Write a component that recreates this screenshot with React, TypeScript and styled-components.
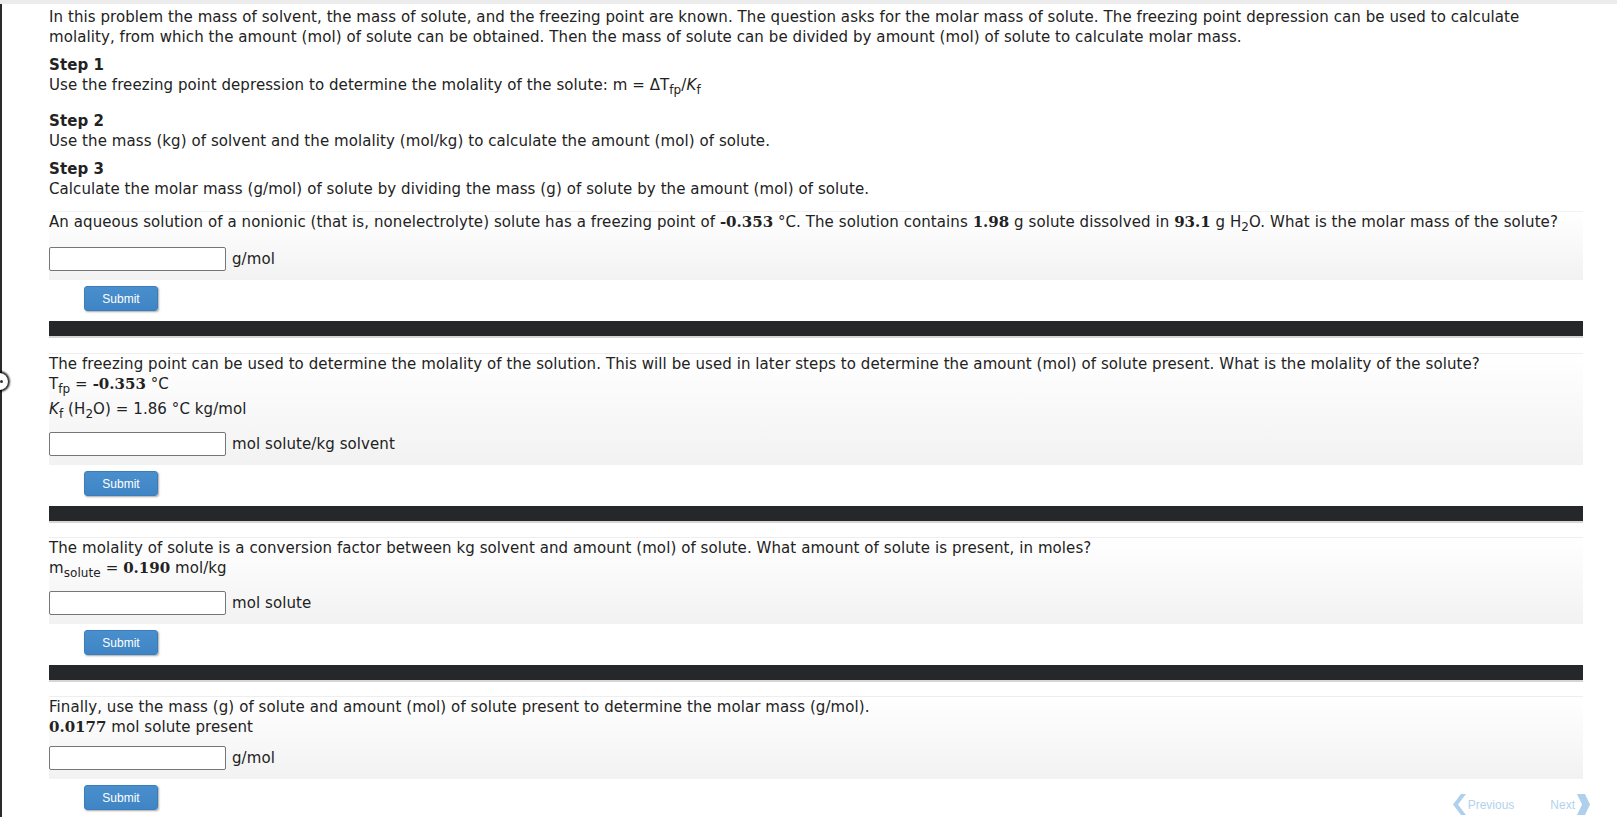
import React from 'react';
import styled, { createGlobalStyle } from 'styled-components';

const GlobalStyle = createGlobalStyle`
  html, body {
    margin: 0;
    padding: 0;
    background: #ffffff;
    overflow: hidden;
  }
  body {
    font-family: "DejaVu Sans", Verdana, sans-serif;
    font-size: 15px;
    line-height: 20px;
    letter-spacing: 0.08px;
    color: #222222;
  }
`;

const Frame = styled.div`
  position: relative;
  min-height: 100vh;
  box-sizing: border-box;
  border-top: 4px solid #ececec;
`;

const Sheet = styled.div`
  min-height: calc(100vh - 4px);
  box-sizing: border-box;
  border-left: 2px solid #2a2a2a;
  padding: 3px 34px 0 47px;
`;

const Handle = styled.div`
  position: absolute;
  left: -9px;
  top: 369px;
  width: 17px;
  height: 17px;
  border-radius: 50%;
  background: #ffffff;
  box-shadow: 0 0 2px 2px rgba(0, 0, 0, 0.85);
  &::after {
    content: '';
    position: absolute;
    left: 9px;
    top: 7px;
    width: 3px;
    height: 3px;
    border-radius: 50%;
    background: #333;
  }
`;

const Para = styled.p<{ gap?: number }>`
  margin: ${p => p.gap ?? 0}px 0 0;
`;

const StepTitle = styled.div<{ gap?: number }>`
  font-weight: bold;
  margin-top: ${p => p.gap ?? 9}px;
`;

const Num = styled.b`
  font-family: "DejaVu Serif", Georgia, serif;
  font-size: 15px;
  font-weight: bold;
  letter-spacing: 0;
`;

const Sub = styled.sub`
  font-size: 12px;
  line-height: 20px;
`;

const Ital = styled.i`
  font-style: italic;
`;

const Box = styled.div<{ gap: number; $plain?: boolean }>`
  margin-top: ${p => p.gap}px;
  border-top: 1px solid ${p => (p.$plain ? 'transparent' : '#eeeeee')};
  background: linear-gradient(to bottom, #ffffff 0%, #f2f2f2 100%);
  padding: 0 0 9px;
`;

const AnswerRow = styled.div<{ gap?: number }>`
  display: flex;
  align-items: center;
  margin-top: ${p => p.gap ?? 9}px;
`;

const Field = styled.input`
  box-sizing: border-box;
  width: 177px;
  height: 24px;
  margin: 0;
  border: 1px solid #767676;
  border-radius: 2px;
  background: #ffffff;
  padding: 1px 4px;
`;

const Unit = styled.span`
  margin-left: 6px;
`;

const ButtonRow = styled.div`
  display: flex;
  align-items: flex-start;
  margin-top: 6px;
  padding-left: 35px;
`;

const SubmitButton = styled.button`
  width: 74px;
  height: 25px;
  border: 1px solid #3b7dbb;
  border-radius: 3px;
  background: linear-gradient(to bottom, #4a8fcd 0%, #3f84c4 100%);
  box-shadow: 1px 1px 2px rgba(0, 0, 0, 0.35);
  color: #ffffff;
  font-family: "Liberation Sans", Arial, sans-serif;
  font-size: 12px;
  letter-spacing: 0;
  padding: 0;
  cursor: pointer;
`;

const Divider = styled.div`
  margin-top: 10px;
  height: 15px;
  background: #262729;
  border-bottom: 2px solid #d6d6d6;
`;

const Nav = styled.div`
  margin-left: auto;
  margin-right: -7px;
  margin-top: 9px;
  display: flex;
  align-items: center;
  gap: 36px;
`;

const NavLink = styled.span`
  display: flex;
  align-items: center;
  gap: 2px;
  font-family: "Liberation Sans", Arial, sans-serif;
  font-size: 12px;
  letter-spacing: 0;
  color: #b3d3ec;
`;

const Chevron = ({ dir }: { dir: 'left' | 'right' }) => (
  <svg width="13" height="21" viewBox="0 0 13 21">
    {dir === 'left' ? (
      <polygon points="13,0 5,10.5 13,21 8,21 0,10.5 8,0" fill="#aed0ec" />
    ) : (
      <polygon points="0,0 8,0 13,10.5 8,21 0,21 5,10.5" fill="#aed0ec" />
    )}
  </svg>
);

interface QuestionProps {
  unit: string;
  gap: number;
  answerGap?: number;
  plain?: boolean;
  nav?: boolean;
  children: React.ReactNode;
}

const Question: React.FC<QuestionProps> = ({ unit, gap, answerGap, plain, nav, children }) => (
  <>
    <Box gap={gap} $plain={plain}>
      {children}
      <AnswerRow gap={answerGap}>
        <Field type="text" />
        <Unit>{unit}</Unit>
      </AnswerRow>
    </Box>
    <ButtonRow>
      <SubmitButton>Submit</SubmitButton>
      {nav && (
        <Nav>
          <NavLink>
            <Chevron dir="left" />
            Previous
          </NavLink>
          <NavLink>
            Next
            <Chevron dir="right" />
          </NavLink>
        </Nav>
      )}
    </ButtonRow>
  </>
);

export default function App() {
  return (
    <>
      <GlobalStyle />
      <Frame>
        <Handle />
        <Sheet>
          <Para>
            In this problem the mass of solvent, the mass of solute, and the freezing point are known. The question asks
            for the molar mass of solute. The freezing point depression can be used to calculate molality, from which
            the amount (mol) of solute can be obtained. Then the mass of solute can be divided by amount (mol) of solute
            to calculate molar mass.
          </Para>

          <StepTitle gap={8}>Step 1</StepTitle>
          <Para>
            Use the freezing point depression to determine the molality of the solute: m = ΔT<Sub>fp</Sub>/<Ital>K</Ital>
            <Sub>f</Sub>
          </Para>

          <StepTitle gap={11}>Step 2</StepTitle>
          <Para>Use the mass (kg) of solvent and the molality (mol/kg) to calculate the amount (mol) of solute.</Para>

          <StepTitle gap={8}>Step 3</StepTitle>
          <Para>Calculate the molar mass (g/mol) of solute by dividing the mass (g) of solute by the amount (mol) of solute.</Para>

          <Question unit="g/mol" gap={12} answerGap={10} plain>
            <Para>
              An aqueous solution of a nonionic (that is, nonelectrolyte) solute has a freezing point of <Num>-0.353</Num>{' '}
              °C. The solution contains <Num>1.98</Num> g solute dissolved in <Num>93.1</Num> g H<Sub>2</Sub>O. What is
              the molar mass of the solute?
            </Para>
          </Question>

          <Divider />
          <Question unit="mol solute/kg solvent" gap={15} answerGap={8}>
            <Para>
              The freezing point can be used to determine the molality of the solution. This will be used in later steps
              to determine the amount (mol) of solute present. What is the molality of the solute?
            </Para>
            <Para>
              T<Sub>fp</Sub> = <Num>-0.353</Num> °C
            </Para>
            <Para>
              <Ital>K</Ital>
              <Sub>f</Sub> (H<Sub>2</Sub>O) = 1.86 °C kg/mol
            </Para>
          </Question>

          <Divider />
          <Question unit="mol solute" gap={14} answerGap={8}>
            <Para>
              The molality of solute is a conversion factor between kg solvent and amount (mol) of solute. What amount of
              solute is present, in moles?
            </Para>
            <Para>
              m<Sub>solute</Sub> = <Num>0.190</Num> mol/kg
            </Para>
          </Question>

          <Divider />
          <Question unit="g/mol" gap={14} answerGap={9} nav>
            <Para>Finally, use the mass (g) of solute and amount (mol) of solute present to determine the molar mass (g/mol).</Para>
            <Para>
              <Num>0.0177</Num> mol solute present
            </Para>
          </Question>
        </Sheet>
      </Frame>
    </>
  );
}
